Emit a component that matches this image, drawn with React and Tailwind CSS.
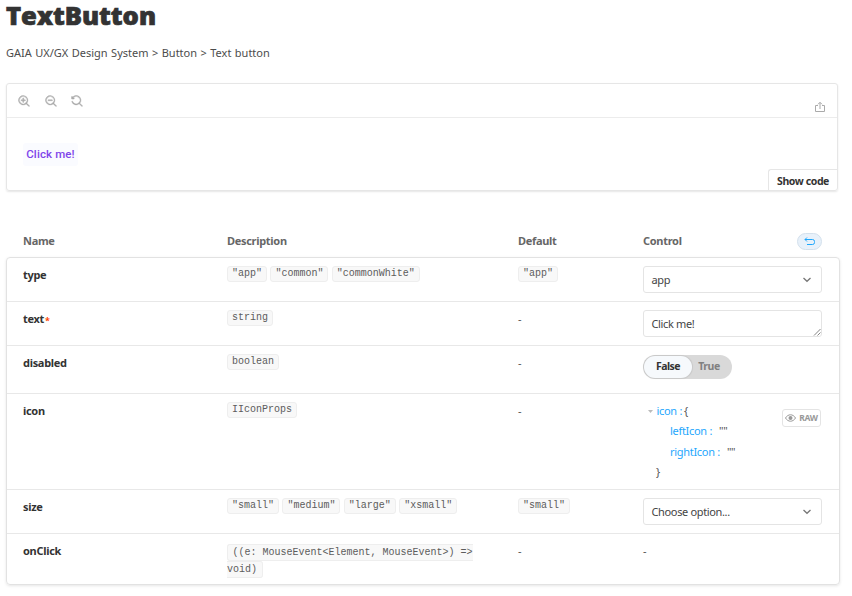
import React from "react";

const sans = "font-['Noto_Sans','Open_Sans',sans-serif]";

function Chip({ children }) {
  return (
    <span className="h-4 rounded-[3px] border border-[#eeeeee] bg-[#f8f8f8] px-1 pt-px font-['Liberation_Mono',monospace] text-[10px] leading-[12px] whitespace-nowrap text-[#5c5c5c]">
      {children}
    </span>
  );
}

function Chips({ items }) {
  if (!items) return <span className="block pt-px text-[11px] leading-[16px] text-[#555]">-</span>;
  return (
    <div className="flex gap-[3.4px]">
      {items.map((item) => (
        <Chip key={item}>{item}</Chip>
      ))}
    </div>
  );
}

function Row({ name, required, description, defaults, control, height, last }) {
  return (
    <div className={`flex ${height} ${last ? "" : "border-b border-[#e8e8e8]"} pl-4`}>
      <div className="flex w-[204px] shrink-0 pt-[9px] text-[11px] leading-[16px] font-bold tracking-[-0.3px] text-[#333]">
        {name}
        {required && <span className="pt-[2px] pl-px text-[9px] leading-[16px] text-[#ff4400]">*</span>}
      </div>
      <div className="w-[291px] shrink-0 pt-2">{description}</div>
      <div className="w-[125px] shrink-0 pt-2">
        <Chips items={defaults} />
      </div>
      <div className="w-[179px] shrink-0 pt-2">{control}</div>
    </div>
  );
}

function Select({ value }) {
  return (
    <div className="flex h-[27px] items-center justify-between rounded-[3px] border border-[#e4e4e4] pr-[9px] pl-[7.5px] text-[11px] tracking-[-0.35px] text-[#444]">
      <span className="pt-[2px]">{value}</span>
      <svg width="10" height="10" viewBox="0 0 10 10" fill="none" stroke="#777" strokeWidth="1.3">
        <path d="M1.500 3L5 6.300 8.500 3" />
      </svg>
    </div>
  );
}

function TextArea() {
  return (
    <div className="flex h-[27px] items-center justify-between rounded-[3px] border border-[#e4e4e4] pl-[7.5px] text-[11px] tracking-[-0.35px] text-[#444]">
      <span className="pt-[2px]">Click me!</span>
      <svg className="self-end" width="8" height="8" viewBox="0 0 8 8" fill="none" stroke="#777" strokeWidth="0.9">
        <path d="M1 7.5L7.5 1M4.5 7.5l3-3" />
      </svg>
    </div>
  );
}

function Toggle() {
  return (
    <div className="mt-[0.5px] flex h-6 w-[89px] rounded-full bg-[#d9d9d9] p-px text-[10.5px] font-bold tracking-[-0.5px]">
      <span className="flex w-[48px] items-center justify-center rounded-full bg-[#f6f9fc] pt-px text-[#333] shadow-[0_0_1px_1px_rgba(0,0,0,0.08)]">
        False
      </span>
      <span className="flex w-[34px] items-center justify-center pt-px text-[#808080]">True</span>
    </div>
  );
}

function ObjectControl() {
  return (
    <div className="flex justify-between text-[11px] tracking-[-0.3px] text-[#555]">
      <div className="pl-[5px]">
        <div className="flex h-[19px] items-center">
          <svg className="mr-[3.5px]" width="5" height="3" viewBox="0 0 5 3">
            <path d="M0 0h5L2.5 3z" fill="#bbb" />
          </svg>
          <span className="text-[#1ea7fd]">icon :</span>
          <span className="ml-0.5">{"{"}</span>
        </div>
        <div className="flex h-[21px] items-center pl-[22px]">
          <span className="text-[#1ea7fd]">leftIcon :</span>
          <span className="ml-[7px]">""</span>
        </div>
        <div className="flex h-[20px] items-center pl-[22px]">
          <span className="text-[#1ea7fd]">rightIcon :</span>
          <span className="ml-[7px]">""</span>
        </div>
        <div className="flex h-[20px] items-center pl-[8px]">{"}"}</div>
      </div>
      <div className="mt-[7px] mr-[1px] flex h-[18px] w-[39px] items-center justify-center gap-[3px] rounded-[3px] border border-[#e4e4e4] text-[8.500px] font-bold tracking-[-0.3px] text-[#999]">
        <svg width="11" height="8" viewBox="0 0 11 8" fill="none" stroke="#999">
          <path d="M.5 4C3-.3 8-.3 10.500 4 8 8.300 3 8.300.5 4z" />
          <circle cx="5.500" cy="4" r="2" fill="#999" stroke="none" />
        </svg>
        RAW
      </div>
    </div>
  );
}

const LENS =
  "M220 670a316 316 0 0 1 0-450 316 316 0 0 1 450 0 316 316 0 0 1 0 450 316 316 0 0 1-450 0zm749 240L757 698a402 402 0 1 0-59 60l212 212c16 16 42 16 59 0 16-17 16-43 0-60z";

function ToolIcon({ d }) {
  return (
    <svg width="12" height="12" viewBox="0 0 1024 1024" fill="#aaa" stroke="#aaa" strokeWidth="36">
      <path d={d} />
    </svg>
  );
}

export default function App() {
  return (
    <div className={`h-[596px] w-[852px] overflow-hidden bg-white pl-1.5 ${sans}`}>
      <h1 className="h-[41px] w-[300px] origin-left scale-x-[1.065] pt-[2px] font-['Open_Sans',sans-serif] text-[24px] leading-[28px] font-extrabold text-[#333] [-webkit-text-stroke:0.7px_#333]">
        TextButton
      </h1>
      <p className="h-[42px] pt-[4px] text-[11px] leading-[16px] [word-spacing:0.6px] whitespace-nowrap text-[#4c4c4c]">
        GAIA UX/GX Design System &gt; Button &gt; Text button
      </p>

      <div className="flex h-[108px] w-[832px] flex-col rounded-[3px] border border-[#e6e6e6] shadow-[0_1px_2px_rgba(0,0,0,0.1)]">
        <div className="flex h-[34px] items-center justify-between border-b border-[#ececec] pr-[11px] pl-[11px]">
          <div className="flex gap-[14.5px]">
            <ToolIcon d={`${LENS}M487 604a42 42 0 0 1-84 0V487H286a42 42 0 1 1 0-84h117V286a42 42 0 1 1 84 0v117h117a42 42 0 0 1 0 84H487v117z`} />
            <ToolIcon d={`${LENS}M604 403H286a42 42 0 1 0 0 84h318a42 42 0 1 0 0-84z`} />
            <ToolIcon d="M148 560a318 318 0 0 0 522 110 316 316 0 0 0 0-450 316 316 0 0 0-450 0c-11 11-21 22-30 34v4h47c25 0 46 21 46 46s-21 45-46 45H90c-13 0-25-6-33-14-9-9-14-20-14-33V156c0-25 20-45 45-45s45 20 45 45v32l1 1a401 401 0 0 1 623 509l212 212a42 42 0 0 1-59 59L698 757A401 401 0 0 1 65 570a42 42 0 0 1 83-10z" />
          </div>
          <svg className="mt-[13px]" width="12" height="12" viewBox="0 0 12 12" fill="none" stroke="#aaa" strokeWidth="1">
            <path d="M4 4.500H1.500v6h9v-6H8M6 8V1.500M4 3.300l2-2 2 2" />
          </svg>
        </div>
        <div className="flex flex-1 justify-between">
          <div className="mt-[25px] ml-4 flex h-[23px] w-[55px] items-center justify-center rounded-[3px] bg-[#fafbff] font-['Roboto',sans-serif] text-[11.500px] font-medium tracking-[0.12px] whitespace-nowrap text-[#7f45ea]">
            Click me!
          </div>
          <div className="flex h-[21px] w-[69px] items-center justify-center self-end rounded-tl-[3px] border-t border-l border-[#e6e6e6] pt-[3px] text-[10.500px] font-bold tracking-[-0.4px] whitespace-nowrap text-[#333]">
            Show code
          </div>
        </div>
      </div>

      <div className="mt-[33px] flex h-[33px] w-[833px] pt-[8px] pl-[17px] text-[11px] leading-[18px] font-bold tracking-[-0.3px] text-[#666]">
        <div className="w-[204px]">Name</div>
        <div className="w-[291px]">Description</div>
        <div className="w-[125px]">Default</div>
        <div className="flex w-[179px] justify-between">
          <span>Control</span>
          <span className="mt-px flex h-[17px] w-[25px] items-center justify-center rounded-full border border-[#d3e0ec] bg-[#e8f1fa]">
            <svg width="11" height="9" viewBox="0 0 11 9" fill="none" stroke="#1ea7fd" strokeWidth="1">
              <path d="M3 .5L1 2.500l2 2M1 2.500h7.500q2 0 2 2v1q0 2-2 2H3" />
            </svg>
          </span>
        </div>
      </div>

      <div className="w-[834px] rounded-[4px] border border-[#e2e2e2] shadow-[0_1px_3px_rgba(0,0,0,0.1)]">
        <Row name="type" height="h-[44px]" description={<Chips items={['"app"', '"common"', '"commonWhite"']} />} defaults={['"app"']} control={<Select value="app" />} />
        <Row name="text" required height="h-[44px]" description={<Chips items={["string"]} />} control={<TextArea />} />
        <Row name="disabled" height="h-[48px]" description={<Chips items={["boolean"]} />} control={<Toggle />} />
        <Row name="icon" height="h-[96px]" description={<Chips items={["IIconProps"]} />} control={<ObjectControl />} />
        <Row name="size" height="h-[44px]" description={<Chips items={['"small"', '"medium"', '"large"', '"xsmall"']} />} defaults={['"small"']} control={<Select value="Choose option..." />} />
        <Row
          name="onClick"
          height="h-[50px]"
          last
          description={
            <div className="w-[250px] pt-[2px] font-['Liberation_Mono',monospace] text-[10px] leading-[17px] text-[#5c5c5c]">
              <span className="rounded-[3px] border border-[#eeeeee] bg-[#f8f8f8] px-[4.5px] py-[2px]">
                ((e: MouseEvent&lt;Element, MouseEvent&gt;) =&gt; void)
              </span>
            </div>
          }
          control={<span className="block pt-px text-[11px] leading-[16px] text-[#555]">-</span>}
        />
      </div>
    </div>
  );
}
